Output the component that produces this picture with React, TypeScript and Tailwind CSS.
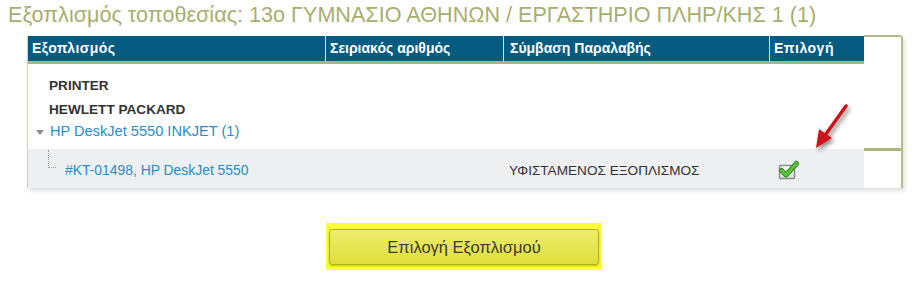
import React from "react";

const cols = "grid grid-cols-[297px_178px_266px_95px]";

function CheckIcon() {
  return (
    <svg width="22" height="20" viewBox="0 0 22 20">
      <defs>
        <linearGradient id="box" x1="0" y1="0" x2="0" y2="1">
          <stop offset="0" stopColor="#ffffff" />
          <stop offset="1" stopColor="#dcdcdc" />
        </linearGradient>
      </defs>
      <rect x="1.5" y="5.5" width="15" height="13" rx="1" fill="url(#box)" stroke="#8c8c8c" strokeWidth="1.5" />
      <path d="M3.5 10.5 L8 15 L18.5 3.5" fill="none" stroke="#2f8a1e" strokeWidth="5" strokeLinecap="round" strokeLinejoin="round" />
      <path d="M3.5 10.5 L8 15 L18.5 3.5" fill="none" stroke="#5cc33c" strokeWidth="3" strokeLinecap="round" strokeLinejoin="round" />
    </svg>
  );
}

function Arrow() {
  return (
    <svg className="absolute left-[806px] top-[100px]" width="48" height="58" viewBox="0 0 48 58">
      <defs>
        <filter id="sh" x="-50%" y="-50%" width="200%" height="200%">
          <feDropShadow dx="2" dy="3" stdDeviation="2" floodColor="#000" floodOpacity="0.45" />
        </filter>
      </defs>
      <g filter="url(#sh)">
        <path d="M40 6 L20 34" stroke="#c8141b" strokeWidth="3.5" strokeLinecap="round" />
        <path d="M10 48 L13 29 L26 38 Z" fill="#c8141b" />
      </g>
    </svg>
  );
}

export default function App() {
  return (
    <div className="relative w-[916px] h-[282px] bg-white font-['Liberation_Sans',Arial,sans-serif]">
      <h1 className="pl-[8px] pt-[2px] text-[21.6px] leading-[25px] text-[#a9ae6f]">
        Εξοπλισμός τοποθεσίας: 13ο ΓΥΜΝΑΣΙΟ ΑΘΗΝΩΝ / ΕΡΓΑΣΤΗΡΙΟ ΠΛΗΡ/ΚΗΣ 1 (1)
      </h1>

      <div className="mt-[9px] ml-[27px] w-[876px] flex border-r-[2px] border-[#b5bd8e] shadow-[2px_3px_4px_rgba(0,0,0,0.12)]">
        {/* table */}
        <div className="w-[837px] border-l border-[#cdd1b6]">
          <div className={`${cols} h-[25px] bg-[#055b80] text-white text-[14px] font-bold border-b-[3px] border-[#a9b67d] box-content`}>
            <div className="px-[4px] leading-[25px] tracking-[0.4px]">Εξοπλισμός</div>
            <div className="px-[4px] leading-[25px] border-l border-[#d8dde0]">Σειριακός αριθμός</div>
            <div className="px-[6px] leading-[25px] border-l border-[#d8dde0]">Σύμβαση Παραλαβής</div>
            <div className="px-[4px] leading-[25px] tracking-[0.5px] border-l border-[#d8dde0]">Επιλογή</div>
          </div>

          <div className="h-[85px] pt-[14px] text-[13.6px] font-bold text-[#333]">
            <div className="pl-[21px] leading-[16px]">PRINTER</div>
            <div className="pl-[21px] mt-[8px] leading-[16px]">HEWLETT PACKARD</div>
            <div className="flex items-center mt-[4px] leading-[18px]">
              <span className="ml-[4px] w-[16px] flex justify-center pt-[3px]">
                <span className="block w-0 h-0 border-l-[4px] border-r-[4px] border-t-[5px] border-l-transparent border-r-transparent border-t-[#8a8a8a]" />
              </span>
              <span className="ml-[2px] text-[14.6px] font-normal text-[#2a8cc9]">HP DeskJet 5550 INKJET (1)</span>
            </div>
          </div>

          <div className={`${cols} h-[39px] bg-[#eeeff1]`}>
            <div className="flex items-start">
              <div className="ml-[20px] mt-[1px] w-[8px] h-[18px] border-l border-b border-dotted border-[#9a9a9a]" />
              <span className="ml-[9px] pt-[2px] leading-[39px] text-[13.9px] text-[#2a8cc9]">#KT-01498, HP DeskJet 5550</span>
            </div>
            <div />
            <div className="pl-[6px] pt-[2px] leading-[39px] text-[13.6px] text-[#333]">ΥΦΙΣΤΑΜΕΝΟΣ ΕΞΟΠΛΙΣΜΟΣ</div>
            <div className="pl-[9px] pt-[11px]">
              <CheckIcon />
            </div>
          </div>
        </div>

        {/* right strip */}
        <div className="flex-1 border-t-[2px] border-[#b5bd8e] -mt-px flex flex-col">
          <div className="h-[111px]" />
          <div className="h-[3px] bg-[#a9b67d]" />
        </div>
      </div>

      <Arrow />

      <div className="mt-[35px] flex justify-center">
        <div className="ml-[12px] p-[3px] pt-[6px] pb-[5px] bg-[#fcfc3a]">
          <button className="w-[270px] h-[36px] rounded-[3px] border border-[#b2b22a] bg-gradient-to-b from-[#eded6a] to-[#dede3c] text-[16.5px] text-[#3b3b2a] shadow-[0_1px_2px_rgba(0,0,0,0.25)]">
            Επιλογή Εξοπλισμού
          </button>
        </div>
      </div>
    </div>
  );
}
